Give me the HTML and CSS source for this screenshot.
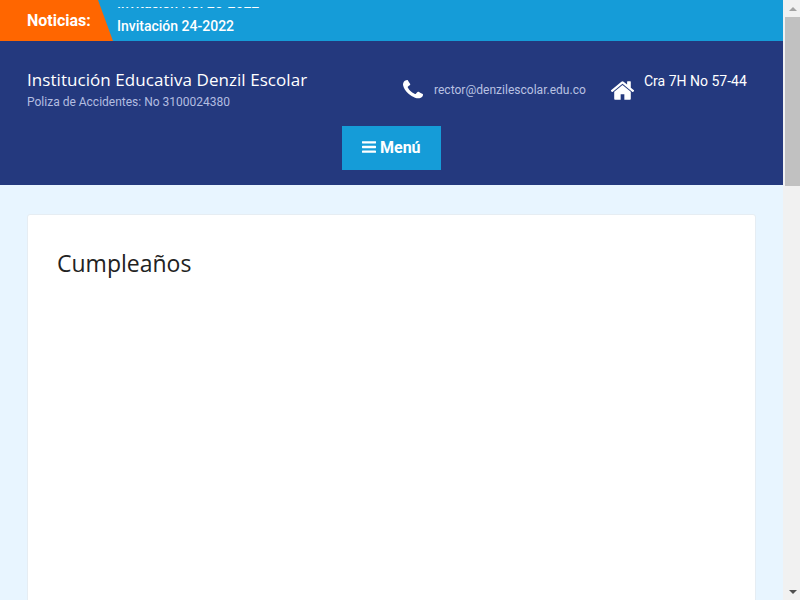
FILE: index.html
```html
<!DOCTYPE html>
<html lang="es">
<head>
<meta charset="utf-8">
<title>Cumpleaños</title>
<link rel="stylesheet" href="styles.css">
</head>
<body>
<div class="page">
  <div class="news">
    <div class="news-label">Noticias:</div>
    <div class="news-window">
      <a class="news-item">Invitación No. 25-2022</a>
      <a class="news-item">Invitación 24-2022</a>
    </div>
  </div>
  <header class="header">
    <div class="header-top">
      <div class="brand">
        <div class="brand-name">Institución Educativa Denzil Escolar</div>
        <div class="brand-sub">Poliza de Accidentes: No 3100024380</div>
      </div>
      <div class="contact contact-mail">
        <svg class="icon-phone" viewBox="0 128 1408 1536" preserveAspectRatio="none"><path fill="currentColor" d="M1408 1240q0 27-10 70.5t-21 68.5q-21 50-122 106-94 51-186 51-27 0-53-3.5t-57.5-12.5-47-14.5-55.5-20.5-49-18q-98-35-175-83-127-79-264-216t-216-264q-48-77-83-175-3-9-18-49t-20.5-55.5-14.5-47-12.5-57.5-3.5-53q0-92 51-186 56-101 106-122 25-11 68.5-21t70.5-10q14 0 21 3 18 6 53 76 11 19 30 54t35 63.5 31 53.5q3 4 17.5 25t21.5 35.5 7 28.5q0 20-28.5 50t-62 55-62 53-28.5 46q0 9 5 22.5t8.5 20.5 14 24 11.5 19q76 137 174 235t235 174q2 1 19 11.5t24 14 20.5 8.5 22.5 5q18 0 46-28.5t53-62 55-62 50-28.5q14 0 28.5 7t35.5 21.5 25 17.5q25 15 53.5 31t63.5 35 54 30q70 35 76 53 3 7 3 21z"/></svg>
        <span class="mail-text">rector@denzilescolar.edu.co</span>
      </div>
      <div class="contact contact-address">
        <svg class="icon-home" viewBox="97 280 1598 1302"><path fill="currentColor" d="M1472 992v480q0 26-19 45t-45 19h-384v-384h-256v384h-384q-26 0-45-19t-19-45v-480q0-1 .5-3t.5-3l575-474 575 474q1 2 1 6zm223-69l-62 74q-8 9-21 11h-3q-13 0-21-7l-692-577-692 577q-12 8-24 7-13-2-21-11l-62-74q-8-10-7-23.5t11-20.5l719-599q32-26 76-26t76 26l244 204v-195q0-14 9-23t23-9h192q14 0 23 9t9 23v408l219 182q10 8 11 21.5t-7 23.5z"/></svg>
        <span class="address-text">Cra 7H No 57-44</span>
      </div>
    </div>
    <div class="menu-row">
      <button class="menu-btn">
        <svg class="icon-bars" viewBox="128 256 1536 1280"><path fill="currentColor" d="M1664 1344v128q0 26-19 45t-45 19h-1408q-26 0-45-19t-19-45v-128q0-26 19-45t45-19h1408q26 0 45 19t19 45zm0-512v128q0 26-19 45t-45 19h-1408q-26 0-45-19t-19-45v-128q0-26 19-45t45-19h1408q26 0 45 19t19 45zm0-512v128q0 26-19 45t-45 19h-1408q-26 0-45-19t-19-45v-128q0-26 19-45t45-19h1408q26 0 45 19t19 45z"/></svg>
        <span class="menu-label">Menú</span>
      </button>
    </div>
  </header>
  <main class="main">
    <section class="card">
      <h1 class="card-title">Cumpleaños</h1>
    </section>
  </main>
</div>
<div class="scrollbar">
  <div class="arrow arrow-up"></div>
  <div class="track"><div class="thumb"></div></div>
  <div class="arrow arrow-down"></div>
</div>
</body>
</html>
```

FILE: styles.css
```css
* { box-sizing: border-box; }
html, body { height: 100%; margin: 0; }
body {
  display: flex;
  overflow: hidden;
  font-family: Roboto, "Liberation Sans", sans-serif;
  background: #e8f5ff;
}
.page {
  flex: 0 0 783px;
  height: 600px;
  overflow: hidden;
  display: flex;
  flex-direction: column;
}
.news {
  flex: 0 0 41px;
  display: flex;
  background: #159cd8;
  overflow: hidden;
}
.news-label {
  flex: 0 0 113px;
  padding: 11px 0 0 27px;
  background: #ff6600;
  clip-path: polygon(0 0, 98px 0, 100% 100%, 0 100%);
  color: #fff;
  font-size: 16px;
  line-height: 19px;
  font-weight: 700;
}
.news-window {
  flex: 1;
  margin: 7px 0 0 4px;
  overflow: hidden;
  height: 28px;
}
.news-item {
  display: block;
  height: 22px;
  color: #fff;
  font-size: 14px;
  line-height: 22px;
  font-weight: 500;
}
.news-item:first-child { height: 23px; margin-top: -15px; }
.header {
  flex: 0 0 144px;
  background: #24397e;
  padding: 28px 0 0 27px;
}
.header-top {
  display: flex;
  height: 57px;
}
.brand { flex: 0 0 376px; }
.brand-name {
  color: #fff;
  font-family: "Open Sans", sans-serif;
  font-size: 17px;
  letter-spacing: 0.06px;
  line-height: 22px;
}
.brand-sub {
  margin-top: 2px;
  color: #b3bde0;
  font-size: 12px;
  line-height: 18px;
}
.contact { display: flex; color: #fff; }
.contact-mail { flex: 0 0 208px; }
.icon-phone { width: 20px; height: 20px; margin-top: 11px; }
.mail-text {
  margin: 12px 0 0 11px;
  color: #b9c2e2;
  font-size: 12px;
  letter-spacing: 0.02px;
  line-height: 18px;
}
.icon-home { width: 23px; height: 20px; margin-top: 12px; }
.address-text {
  margin: 3px 0 0 10px;
  font-size: 14px;
  line-height: 18px;
}
.menu-row { display: flex; padding-left: 315px; }
.menu-btn {
  display: flex;
  align-items: center;
  gap: 4px;
  width: 99px;
  height: 44px;
  padding: 0 0 2px 20px;
  border: 0;
  background: #159cd8;
  color: #fff;
  font-family: Roboto, sans-serif;
  font-size: 16px;
  font-weight: 700;
}
.icon-bars { width: 14px; height: 12px; }
.main {
  flex: 1;
  padding: 29px 27px 0;
}
.card {
  height: 400px;
  padding: 30px 29px;
  background: #fff;
  border: 1px solid #e6edf3;
  border-radius: 3px;
}
.card-title {
  margin: 0;
  color: #222;
  font-family: "Open Sans", sans-serif;
  font-size: 23px;
  line-height: 36px;
  font-weight: 400;
}
.scrollbar {
  flex: 0 0 17px;
  height: 600px;
  display: flex;
  flex-direction: column;
  background: #f1f1f1;
}
.arrow {
  flex: 0 0 17px;
  display: flex;
  justify-content: center;
  align-items: center;
  padding-left: 2px;
}
.arrow::before {
  content: "";
  border-left: 4px solid transparent;
  border-right: 4px solid transparent;
}
.arrow-up::before { border-bottom: 4px solid #a3a3a3; }
.arrow-down::before { border-top: 4px solid #505050; }
.track { flex: 1; }
.thumb { height: 169px; margin-left: 2px; background: #c1c1c1; }
```
